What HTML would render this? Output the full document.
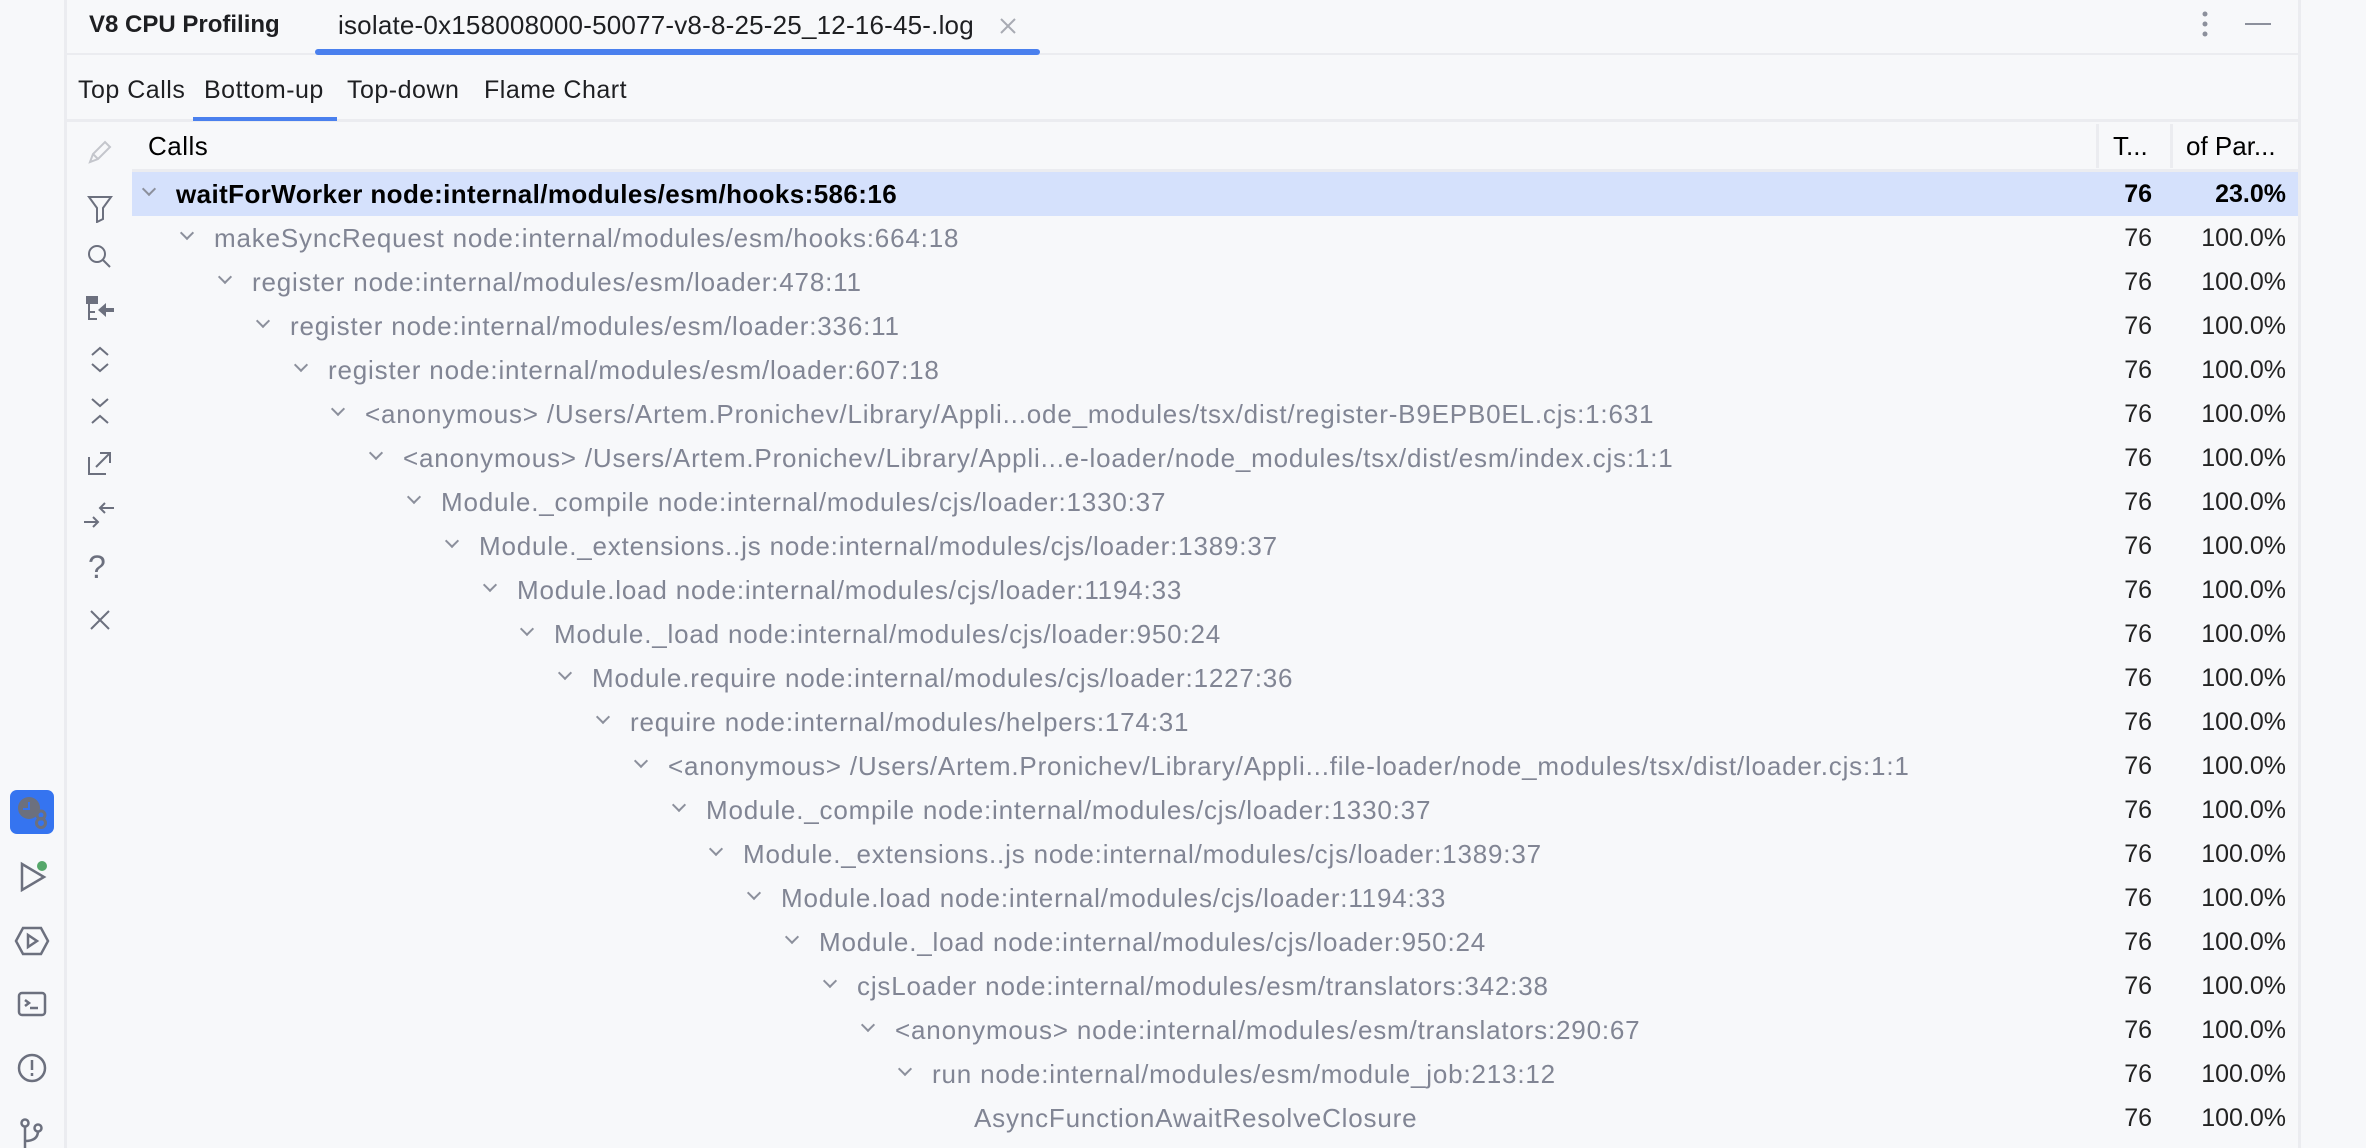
<!DOCTYPE html>
<html style="overflow:hidden;width:2366px;height:1148px"><head><meta charset="utf-8">
<style>
*{margin:0;padding:0;box-sizing:border-box}
body{width:2366px;height:1148px;background:#f7f8fa;font-family:"Liberation Sans",sans-serif;position:relative;overflow:hidden;color:#000}
.a{position:absolute;white-space:nowrap}
.row{position:absolute;left:132px;width:2166px;height:44px;font-size:26px;color:#818594;line-height:44px;white-space:nowrap}
.row .t{position:absolute;letter-spacing:0.82px}
.row .ch{position:absolute;width:10px;height:10px;border-right:2px solid #8c909c;border-bottom:2px solid #8c909c;transform:rotate(45deg);top:12px}
.row .n{position:absolute;right:146px;color:#222;font-size:25px}
.row .p{position:absolute;right:12px;color:#222;font-size:25px}
.sel{background:#d5e1fc}
.sel .t,.sel .n,.sel .p{color:#000;font-weight:bold}
.sel .t{letter-spacing:0.4px}
svg.i{position:absolute}
.st{position:absolute;top:76px;font-size:25px;color:#1e1f22;letter-spacing:0.5px;white-space:nowrap}
</style></head><body>
<div class="a" style="left:64px;top:0;width:3px;height:1148px;background:#ebecf0"></div>
<div class="a" style="left:2298px;top:0;width:3px;height:1148px;background:#ebecf0"></div>
<div class="a" style="left:89px;top:11px;font-size:24px;font-weight:bold;color:#1e1f22">V8 CPU Profiling</div>
<div class="a" style="left:338px;top:10px;font-size:26px;letter-spacing:0.2px;color:#1e1f22">isolate-0x158008000-50077-v8-8-25-25_12-16-45-.log</div>
<svg class="i" style="left:999px;top:17px" width="18" height="18"><path d="M2 2L16 16M16 2L2 16" stroke="#a8abb3" stroke-width="2"/></svg>
<div class="a" style="left:67px;top:53px;width:2231px;height:2px;background:#ebecf0"></div>
<div class="a" style="left:315px;top:49px;width:725px;height:6px;background:#4a80ee;border-radius:3px"></div>
<svg class="i" style="left:2200px;top:10px" width="10" height="28"><circle cx="5" cy="4" r="2.5" fill="#8c909c"/><circle cx="5" cy="14" r="2.5" fill="#8c909c"/><circle cx="5" cy="24" r="2.5" fill="#8c909c"/></svg>
<div class="a" style="left:2245px;top:23px;width:26px;height:2px;background:#8c909c"></div>
<div class="st" style="left:78px">Top Calls</div>
<div class="st" style="left:204px">Bottom-up</div>
<div class="st" style="left:347px">Top-down</div>
<div class="st" style="left:484px">Flame Chart</div>
<div class="a" style="left:67px;top:119px;width:2231px;height:3px;background:#ebecf0"></div>
<div class="a" style="left:193px;top:117px;width:144px;height:4px;background:#4a80ee"></div>
<div class="a" style="left:148px;top:131px;font-size:26px;color:#000;letter-spacing:0.5px">Calls</div>
<div class="a" style="left:2096px;top:124px;width:3px;height:44px;background:#ebecf0"></div>
<div class="a" style="left:2170px;top:124px;width:3px;height:44px;background:#ebecf0"></div>
<div class="a" style="left:2113px;top:131px;font-size:26px;color:#000">T...</div>
<div class="a" style="left:2186px;top:131px;font-size:26px;color:#000">of Par...</div>
<div class="a" style="left:132px;top:169px;width:2166px;height:3px;background:#ebecf0"></div>
<svg class="i" style="left:86px;top:138px" width="28" height="28" fill="none" stroke="#c4c6cc" stroke-width="2"><path d="M4 24l3-8L19 4l5 5-12 12z M7 16l5 5"/></svg>
<svg class="i" style="left:86px;top:193px" width="28" height="30" fill="none" stroke="#6c707e" stroke-width="2"><path d="M3 4h22l-8 11v11l-6 3V15z"/></svg>
<svg class="i" style="left:86px;top:243px" width="28" height="28" fill="none" stroke="#6c707e" stroke-width="2"><circle cx="11" cy="11" r="8"/><path d="M17 17l7 7"/></svg>
<svg class="i" style="left:84px;top:294px" width="32" height="28"><rect x="2" y="2" width="12" height="8" fill="#6c707e"/><path d="M5 10v15h8M5 18h6" stroke="#6c707e" stroke-width="2" fill="none"/><path d="M14 16l8-7v5h8v4h-8v5z" fill="#6c707e"/></svg>
<svg class="i" style="left:88px;top:345px" width="24" height="30" fill="none" stroke="#6c707e" stroke-width="2"><path d="M4 10l8-7 8 7M4 19l8 7 8-7"/></svg>
<svg class="i" style="left:88px;top:396px" width="24" height="30" fill="none" stroke="#6c707e" stroke-width="2"><path d="M4 3l8 7 8-7M4 27l8-7 8 7"/></svg>
<svg class="i" style="left:86px;top:449px" width="28" height="28" fill="none" stroke="#6c707e" stroke-width="2"><path d="M3 8v17h17M10 18L24 4M14 4h10v10"/></svg>
<svg class="i" style="left:82px;top:500px" width="34" height="30" fill="none" stroke="#6c707e" stroke-width="2"><path d="M2 22h14M11 17l5 5-5 5M32 8H18M23 3l-5 5 5 5"/></svg>
<div class="a" style="left:88px;top:549px;font-size:32px;color:#6c707e">?</div>
<svg class="i" style="left:88px;top:608px" width="24" height="24" fill="none" stroke="#6c707e" stroke-width="2"><path d="M3 3l18 18M21 3L3 21"/></svg>
<div class="a" style="left:10px;top:790px;width:44px;height:44px;background:#3574f0;border-radius:7px"></div>
<svg class="i" style="left:14px;top:794px" width="36" height="36"><circle cx="15" cy="14" r="11" fill="#6c707e"/><path d="M15 8v7h-6" stroke="#3574f0" stroke-width="2" fill="none"/><circle cx="27" cy="21" r="4" fill="none" stroke="#6c707e" stroke-width="3"/><circle cx="27" cy="29" r="4.5" fill="none" stroke="#6c707e" stroke-width="3"/></svg>
<svg class="i" style="left:18px;top:858px" width="32" height="34" fill="none" stroke="#6c707e" stroke-width="2.5"><path d="M4 6v26l22-13z"/><circle cx="24" cy="8" r="5" fill="#55a76a" stroke="none"/></svg>
<svg class="i" style="left:14px;top:925px" width="36" height="32" fill="none" stroke="#6c707e" stroke-width="2.5"><path d="M2 16L9 3h18l7 13-7 13H9z M14 10v12l9-6z"/></svg>
<svg class="i" style="left:17px;top:991px" width="32" height="28" fill="none" stroke="#6c707e" stroke-width="2.5"><rect x="2" y="2" width="26" height="22" rx="3"/><path d="M8 9l4 3-4 3M13 17h8"/></svg>
<svg class="i" style="left:17px;top:1053px" width="30" height="30" fill="none" stroke="#6c707e" stroke-width="2.5"><circle cx="15" cy="15" r="13"/><path d="M15 7v10M15 20v3"/></svg>
<svg class="i" style="left:18px;top:1118px" width="28" height="30" fill="none" stroke="#6c707e" stroke-width="2.5"><circle cx="7" cy="5" r="3.5"/><circle cx="20" cy="10" r="3.5"/><path d="M7 9v22M7 23q13 0 13-10"/></svg>
<div class="row sel" style="top:172px"><span class="ch" style="left:12px"></span><span class="t" style="left:44px">waitForWorker node:internal/modules/esm/hooks:586:16</span><span class="n">76</span><span class="p">23.0%</span></div>
<div class="row" style="top:216px"><span class="ch" style="left:50px"></span><span class="t" style="left:82px">makeSyncRequest node:internal/modules/esm/hooks:664:18</span><span class="n">76</span><span class="p">100.0%</span></div>
<div class="row" style="top:260px"><span class="ch" style="left:88px"></span><span class="t" style="left:120px">register node:internal/modules/esm/loader:478:11</span><span class="n">76</span><span class="p">100.0%</span></div>
<div class="row" style="top:304px"><span class="ch" style="left:126px"></span><span class="t" style="left:158px">register node:internal/modules/esm/loader:336:11</span><span class="n">76</span><span class="p">100.0%</span></div>
<div class="row" style="top:348px"><span class="ch" style="left:164px"></span><span class="t" style="left:196px">register node:internal/modules/esm/loader:607:18</span><span class="n">76</span><span class="p">100.0%</span></div>
<div class="row" style="top:392px"><span class="ch" style="left:201px"></span><span class="t" style="left:233px">&lt;anonymous&gt; /Users/Artem.Pronichev/Library/Appli...ode_modules/tsx/dist/register-B9EPB0EL.cjs:1:631</span><span class="n">76</span><span class="p">100.0%</span></div>
<div class="row" style="top:436px"><span class="ch" style="left:239px"></span><span class="t" style="left:271px">&lt;anonymous&gt; /Users/Artem.Pronichev/Library/Appli...e-loader/node_modules/tsx/dist/esm/index.cjs:1:1</span><span class="n">76</span><span class="p">100.0%</span></div>
<div class="row" style="top:480px"><span class="ch" style="left:277px"></span><span class="t" style="left:309px">Module._compile node:internal/modules/cjs/loader:1330:37</span><span class="n">76</span><span class="p">100.0%</span></div>
<div class="row" style="top:524px"><span class="ch" style="left:315px"></span><span class="t" style="left:347px">Module._extensions..js node:internal/modules/cjs/loader:1389:37</span><span class="n">76</span><span class="p">100.0%</span></div>
<div class="row" style="top:568px"><span class="ch" style="left:353px"></span><span class="t" style="left:385px">Module.load node:internal/modules/cjs/loader:1194:33</span><span class="n">76</span><span class="p">100.0%</span></div>
<div class="row" style="top:612px"><span class="ch" style="left:390px"></span><span class="t" style="left:422px">Module._load node:internal/modules/cjs/loader:950:24</span><span class="n">76</span><span class="p">100.0%</span></div>
<div class="row" style="top:656px"><span class="ch" style="left:428px"></span><span class="t" style="left:460px">Module.require node:internal/modules/cjs/loader:1227:36</span><span class="n">76</span><span class="p">100.0%</span></div>
<div class="row" style="top:700px"><span class="ch" style="left:466px"></span><span class="t" style="left:498px">require node:internal/modules/helpers:174:31</span><span class="n">76</span><span class="p">100.0%</span></div>
<div class="row" style="top:744px"><span class="ch" style="left:504px"></span><span class="t" style="left:536px">&lt;anonymous&gt; /Users/Artem.Pronichev/Library/Appli...file-loader/node_modules/tsx/dist/loader.cjs:1:1</span><span class="n">76</span><span class="p">100.0%</span></div>
<div class="row" style="top:788px"><span class="ch" style="left:542px"></span><span class="t" style="left:574px">Module._compile node:internal/modules/cjs/loader:1330:37</span><span class="n">76</span><span class="p">100.0%</span></div>
<div class="row" style="top:832px"><span class="ch" style="left:579px"></span><span class="t" style="left:611px">Module._extensions..js node:internal/modules/cjs/loader:1389:37</span><span class="n">76</span><span class="p">100.0%</span></div>
<div class="row" style="top:876px"><span class="ch" style="left:617px"></span><span class="t" style="left:649px">Module.load node:internal/modules/cjs/loader:1194:33</span><span class="n">76</span><span class="p">100.0%</span></div>
<div class="row" style="top:920px"><span class="ch" style="left:655px"></span><span class="t" style="left:687px">Module._load node:internal/modules/cjs/loader:950:24</span><span class="n">76</span><span class="p">100.0%</span></div>
<div class="row" style="top:964px"><span class="ch" style="left:693px"></span><span class="t" style="left:725px">cjsLoader node:internal/modules/esm/translators:342:38</span><span class="n">76</span><span class="p">100.0%</span></div>
<div class="row" style="top:1008px"><span class="ch" style="left:731px"></span><span class="t" style="left:763px">&lt;anonymous&gt; node:internal/modules/esm/translators:290:67</span><span class="n">76</span><span class="p">100.0%</span></div>
<div class="row" style="top:1052px"><span class="ch" style="left:768px"></span><span class="t" style="left:800px">run node:internal/modules/esm/module_job:213:12</span><span class="n">76</span><span class="p">100.0%</span></div>
<div class="row" style="top:1096px"><span class="t" style="left:842px">AsyncFunctionAwaitResolveClosure</span><span class="n">76</span><span class="p">100.0%</span></div>
</body></html>
